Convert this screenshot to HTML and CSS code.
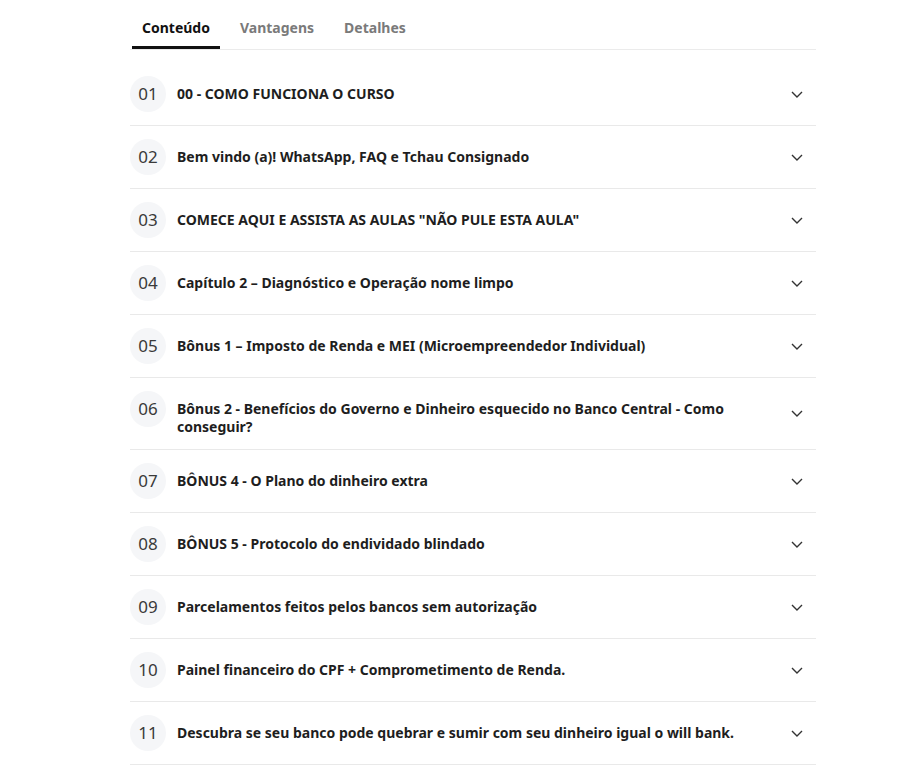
FILE: index.html
```html
<!doctype html>
<html lang="pt-BR">
	<head>
		<meta charset="UTF-8">
		<title>Conteúdo do curso</title>
		<link rel="stylesheet" href="styles.css">
	</head>
	<body>
		<div id="box">
			<div class="tabs">
				<ul>
					<li class="active">Conteúdo</li>
					<li>Vantagens</li>
					<li>Detalhes</li>
				</ul>
			</div>
			<div class="modules">
				<ul>
					<li>
						<div class="left"><span class="num">01</span><p>00 - COMO FUNCIONA O CURSO</p></div>
						<svg class="arrow" viewBox="0 0 12 7"><path d="M1 1l5 5 5-5"/></svg>
					</li>
					<li>
						<div class="left"><span class="num">02</span><p>Bem vindo (a)! WhatsApp, FAQ e Tchau Consignado</p></div>
						<svg class="arrow" viewBox="0 0 12 7"><path d="M1 1l5 5 5-5"/></svg>
					</li>
					<li>
						<div class="left"><span class="num">03</span><p>COMECE AQUI E ASSISTA AS AULAS "NÃO PULE ESTA AULA"</p></div>
						<svg class="arrow" viewBox="0 0 12 7"><path d="M1 1l5 5 5-5"/></svg>
					</li>
					<li>
						<div class="left"><span class="num">04</span><p>Capítulo 2 – Diagnóstico e Operação nome limpo</p></div>
						<svg class="arrow" viewBox="0 0 12 7"><path d="M1 1l5 5 5-5"/></svg>
					</li>
					<li>
						<div class="left"><span class="num">05</span><p>Bônus 1 – Imposto de Renda e MEI (Microempreendedor Individual)</p></div>
						<svg class="arrow" viewBox="0 0 12 7"><path d="M1 1l5 5 5-5"/></svg>
					</li>
					<li>
						<div class="left"><span class="num">06</span><p>Bônus 2 - Benefícios do Governo e Dinheiro esquecido no Banco Central - Como conseguir?</p></div>
						<svg class="arrow" viewBox="0 0 12 7"><path d="M1 1l5 5 5-5"/></svg>
					</li>
					<li>
						<div class="left"><span class="num">07</span><p>BÔNUS 4 - O Plano do dinheiro extra</p></div>
						<svg class="arrow" viewBox="0 0 12 7"><path d="M1 1l5 5 5-5"/></svg>
					</li>
					<li>
						<div class="left"><span class="num">08</span><p>BÔNUS 5 - Protocolo do endividado blindado</p></div>
						<svg class="arrow" viewBox="0 0 12 7"><path d="M1 1l5 5 5-5"/></svg>
					</li>
					<li>
						<div class="left"><span class="num">09</span><p>Parcelamentos feitos pelos bancos sem autorização</p></div>
						<svg class="arrow" viewBox="0 0 12 7"><path d="M1 1l5 5 5-5"/></svg>
					</li>
					<li>
						<div class="left"><span class="num">10</span><p>Painel financeiro do CPF + Comprometimento de Renda.</p></div>
						<svg class="arrow" viewBox="0 0 12 7"><path d="M1 1l5 5 5-5"/></svg>
					</li>
					<li>
						<div class="left"><span class="num">11</span><p>Descubra se seu banco pode quebrar e sumir com seu dinheiro igual o will bank.</p></div>
						<svg class="arrow" viewBox="0 0 12 7"><path d="M1 1l5 5 5-5"/></svg>
					</li>
				</ul>
			</div>
		</div>
	</body>
</html>
```

FILE: styles.css
```css
*{ margin: 0; padding: 0; box-sizing: border-box; font-family: "Noto Sans", "Liberation Sans", sans-serif;}
li{ list-style: none;}
body{ background: #fff; color: #222;}
#box{
	width: 686px;
	margin-left: 130px;
}
#box .tabs{
	border-bottom: 1px solid #ebebeb;
	padding-left: 2px;
}
#box .tabs ul{
	display: flex;
	gap: 10px;
}
#box .tabs li{
	padding: 18px 10px 9px;
	font-size: 14px;
	font-weight: bold;
	line-height: 19px;
	color: #7a7a7a;
	border-bottom: 3px solid transparent;
	cursor: pointer;
}
#box .tabs li.active{
	color: #111;
	border-bottom-color: #111;
}
#box .modules{
	margin-top: 13px;
}
#box .modules li{
	display: flex;
	align-items: center;
	justify-content: space-between;
	padding: 13px 13px 13px 0;
	border-bottom: 1px solid #e9e9e9;
}
#box .modules .left{
	display: flex;
	align-items: flex-start;
	gap: 11px;
}
#box .modules .num{
	flex: none;
	width: 36px;
	height: 36px;
	border-radius: 50%;
	background: #f5f6f8;
	text-align: center;
	line-height: 36px;
	font-size: 17px;
	color: #3a3a3a;
}
#box .modules p{
	padding-top: 9px;
	font-size: 14px;
	font-weight: bold;
	line-height: 18px;
	color: #1e1e1e;
	max-width: 560px;
}
#box .modules .arrow{
	flex: none;
	width: 12px;
	height: 7px;
	margin-left: 20px;
	fill: none;
	stroke: #333;
	stroke-width: 1.4;
}
```
